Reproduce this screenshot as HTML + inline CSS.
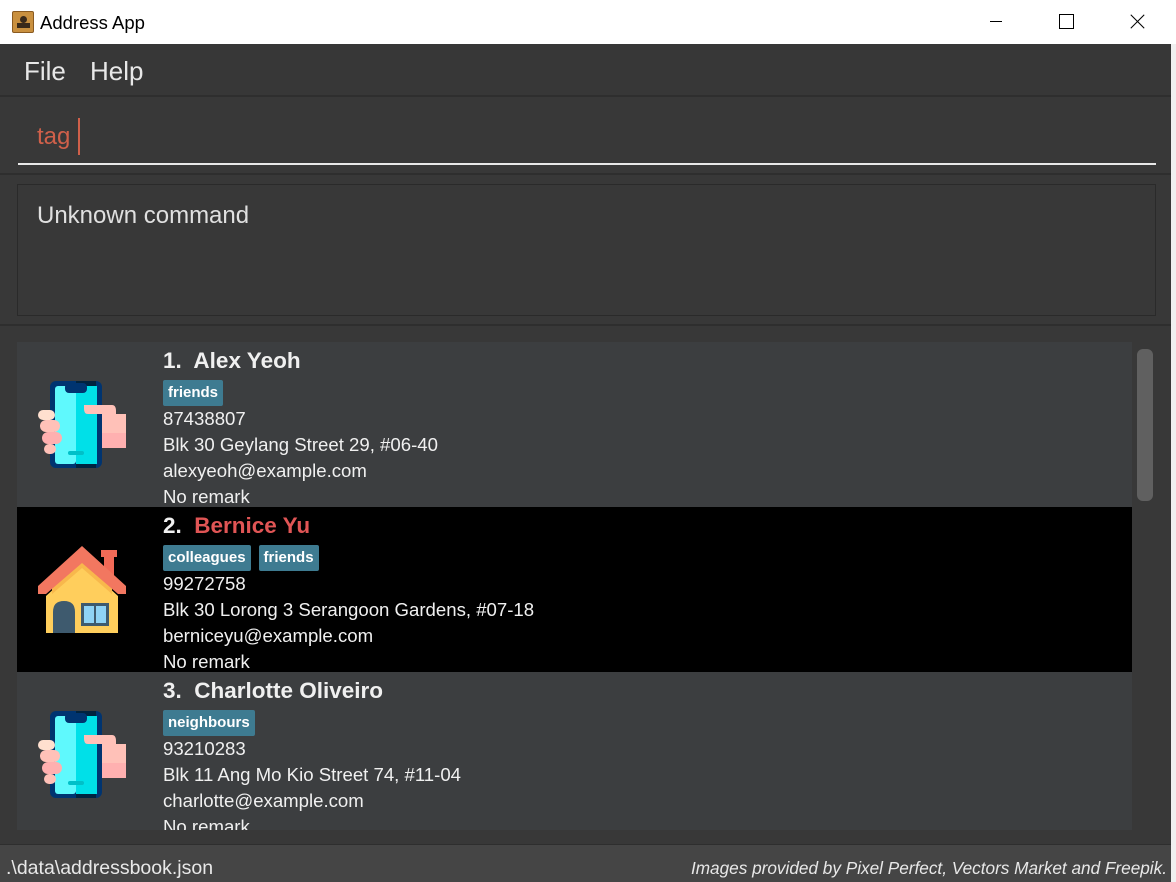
<!DOCTYPE html>
<html><head><meta charset="utf-8"><style>
*{margin:0;padding:0;box-sizing:border-box}
body{width:1176px;height:882px;background:#f0f0f0;font-family:"Liberation Sans",sans-serif;position:relative;overflow:hidden}
.a{position:absolute}
.title{left:0;top:0;width:1176px;height:44px;background:#fff}
.win{left:0;top:44px;width:1171px;height:838px;background:#383838}
.card{left:17px;width:1115px;height:165px;background:#3c3e40;overflow:hidden}
.num{color:#f0f0f0;font-weight:bold;font-size:22.5px}
.tag{display:inline-block;background:#3e7b91;color:#fff;font-size:15px;font-weight:bold;padding:0 5px;line-height:26px;border-radius:2px;margin-right:8px;height:26px}
.line{color:#f0f0f0;font-size:18.6px;height:26px;line-height:26px;white-space:nowrap}
</style></head><body>
<div class="a title">
 <div class="a" style="left:12px;top:11px;width:22px;height:22px;background:#c9903f;border:1px solid #8a5a20;border-radius:2px"><div class="a" style="left:7px;top:4px;width:7px;height:7px;background:#3a2a1a;border-radius:50%"></div><div class="a" style="left:4px;top:11px;width:13px;height:5px;background:#3a2a1a"></div></div>
 <div class="a" style="left:40px;top:12px;font-size:18.5px;color:#000">Address App</div>
 <div class="a" style="left:990px;top:21px;width:12px;height:1px;background:#000"></div>
 <div class="a" style="left:1059px;top:14px;width:15px;height:15px;border:1px solid #000"></div>
 <div class="a" style="left:1128px;top:21px;width:19px;height:1px;background:#000;transform:rotate(45deg)"></div>
 <div class="a" style="left:1128px;top:21px;width:19px;height:1px;background:#000;transform:rotate(-45deg)"></div>
</div>
<div class="a win"></div>
<div class="a" style="left:0;top:44px;width:1171px;height:53px;background:#373737;border-bottom:2px solid #2e2e2e"></div>
<div class="a" style="left:24px;top:56px;font-size:26px;color:#e8e8e8">File</div>
<div class="a" style="left:90px;top:56px;font-size:26px;color:#e8e8e8">Help</div>
<div class="a" style="left:0;top:99px;width:1171px;height:76px;background:#383838;border-bottom:2px solid #2e2e2e"></div>
<div class="a" style="left:37px;top:123px;font-size:24px;color:#d0604a">tag</div>
<div class="a" style="left:78px;top:118px;width:2px;height:37px;background:#d0604a"></div>
<div class="a" style="left:18px;top:163px;width:1138px;height:2px;background:#e8e8e8"></div>
<div class="a" style="left:17px;top:184px;width:1139px;height:132px;background:#383838;border:1px solid #2a2a2a"></div>
<div class="a" style="left:37px;top:202px;font-size:24px;color:#e0e0e0">Unknown command</div>
<div class="a" style="left:0;top:324px;width:1171px;height:2px;background:#2e2e2e"></div>

<div class="a card" style="top:342px">
 <svg class="a" style="left:21px;top:39px" width="88" height="88" viewBox="0 0 88 88">
  <rect x="12" y="0" width="52" height="87" rx="6" fill="#003470"/><rect x="38" y="0" width="20" height="87" fill="#00233f"/>
  <rect x="17" y="5" width="21" height="78" rx="3" fill="#5ff9fd"/><rect x="38" y="5" width="21" height="78" fill="#00e0e8"/>
  <rect x="27" y="2" width="22" height="10" rx="4" fill="#003470"/>
  <rect x="30" y="70" width="16" height="4" rx="2" fill="#00c0c8"/>
  <path d="M46 24 H74 Q78 24 78 30 V33 H88 V58 H77 V67 H64 V33 H50 Q46 33 46 28Z" fill="#ffc1b8"/>
  <rect x="64" y="52" width="24" height="15" fill="#ffb0b0"/>
  <rect x="0" y="29" width="17" height="10" rx="5" fill="#ffe0cf"/><rect x="2" y="39" width="20" height="12" rx="6" fill="#ffc1b8"/><rect x="4" y="51" width="20" height="12" rx="6" fill="#ffb0b0"/><rect x="6" y="63" width="12" height="10" rx="5" fill="#ffc1b8"/>
 </svg>
 <div class="a" style="left:146px;top:6px"><span class="num">1.&nbsp; Alex Yeoh</span></div>
 <div class="a" style="left:146px;top:38px"><span class="tag">friends</span></div>
 <div class="a" style="left:146px;top:64px">
  <div class="line">87438807</div><div class="line">Blk 30 Geylang Street 29, #06-40</div><div class="line">alexyeoh@example.com</div><div class="line">No remark</div></div>
</div>
<div class="a card" style="top:507px;background:#000">
 <svg class="a" style="left:21px;top:39px" width="88" height="88" viewBox="0 0 88 88">
  <rect x="63" y="4" width="16" height="7" fill="#f26a57"/><rect x="66" y="10" width="10" height="22" fill="#f26a57"/>
  <path d="M8 50 L44 17 L80 50 V87 H8Z" fill="#ffce5c"/>
  <path d="M44 14 L14 40 V48 L44 22 L74 48 V40Z" fill="#f8b84c"/>
  <path d="M0 40 L44 0 L88 40 V48 L80 48 L44 17 L8 48 L0 48Z" fill="#f27760"/>
  <path d="M15 87 V66 Q15 55 26 55 Q37 55 37 66 V87Z" fill="#3e5a6e"/>
  <rect x="43" y="57" width="28" height="23" fill="#3e5a6e"/><rect x="46" y="60" width="10" height="17" fill="#8fd3f5"/><rect x="58" y="60" width="10" height="17" fill="#8fd3f5"/>
 </svg>
 <div class="a" style="left:146px;top:6px"><span class="num">2.&nbsp; </span><span class="num" style="color:#e05555">Bernice Yu</span></div>
 <div class="a" style="left:146px;top:38px"><span class="tag">colleagues</span><span class="tag">friends</span></div>
 <div class="a" style="left:146px;top:64px">
  <div class="line">99272758</div><div class="line">Blk 30 Lorong 3 Serangoon Gardens, #07-18</div><div class="line">berniceyu@example.com</div><div class="line">No remark</div></div>
</div>
<div class="a card" style="top:672px;height:158px">
 <svg class="a" style="left:21px;top:39px" width="88" height="88" viewBox="0 0 88 88">
  <rect x="12" y="0" width="52" height="87" rx="6" fill="#003470"/><rect x="38" y="0" width="20" height="87" fill="#00233f"/>
  <rect x="17" y="5" width="21" height="78" rx="3" fill="#5ff9fd"/><rect x="38" y="5" width="21" height="78" fill="#00e0e8"/>
  <rect x="27" y="2" width="22" height="10" rx="4" fill="#003470"/>
  <rect x="30" y="70" width="16" height="4" rx="2" fill="#00c0c8"/>
  <path d="M46 24 H74 Q78 24 78 30 V33 H88 V58 H77 V67 H64 V33 H50 Q46 33 46 28Z" fill="#ffc1b8"/>
  <rect x="64" y="52" width="24" height="15" fill="#ffb0b0"/>
  <rect x="0" y="29" width="17" height="10" rx="5" fill="#ffe0cf"/><rect x="2" y="39" width="20" height="12" rx="6" fill="#ffc1b8"/><rect x="4" y="51" width="20" height="12" rx="6" fill="#ffb0b0"/><rect x="6" y="63" width="12" height="10" rx="5" fill="#ffc1b8"/>
 </svg>
 <div class="a" style="left:146px;top:6px"><span class="num">3.&nbsp; Charlotte Oliveiro</span></div>
 <div class="a" style="left:146px;top:38px"><span class="tag">neighbours</span></div>
 <div class="a" style="left:146px;top:64px">
  <div class="line">93210283</div><div class="line">Blk 11 Ang Mo Kio Street 74, #11-04</div><div class="line">charlotte@example.com</div><div class="line">No remark</div></div>
</div>
<div class="a" style="left:1137px;top:349px;width:16px;height:152px;background:#606060;border-radius:6px"></div>
<div class="a" style="left:0;top:844px;width:1171px;height:38px;background:#454545;border-top:1px solid #2e2e2e"></div>
<div class="a" style="left:6px;top:857px;font-size:19.5px;color:#e8e8e8">.\data\addressbook.json</div>
<div class="a" style="right:9px;top:858px;font-size:17.2px;font-style:italic;color:#e8e8e8">Images provided by Pixel Perfect, Vectors Market and Freepik.</div>
</body></html>
